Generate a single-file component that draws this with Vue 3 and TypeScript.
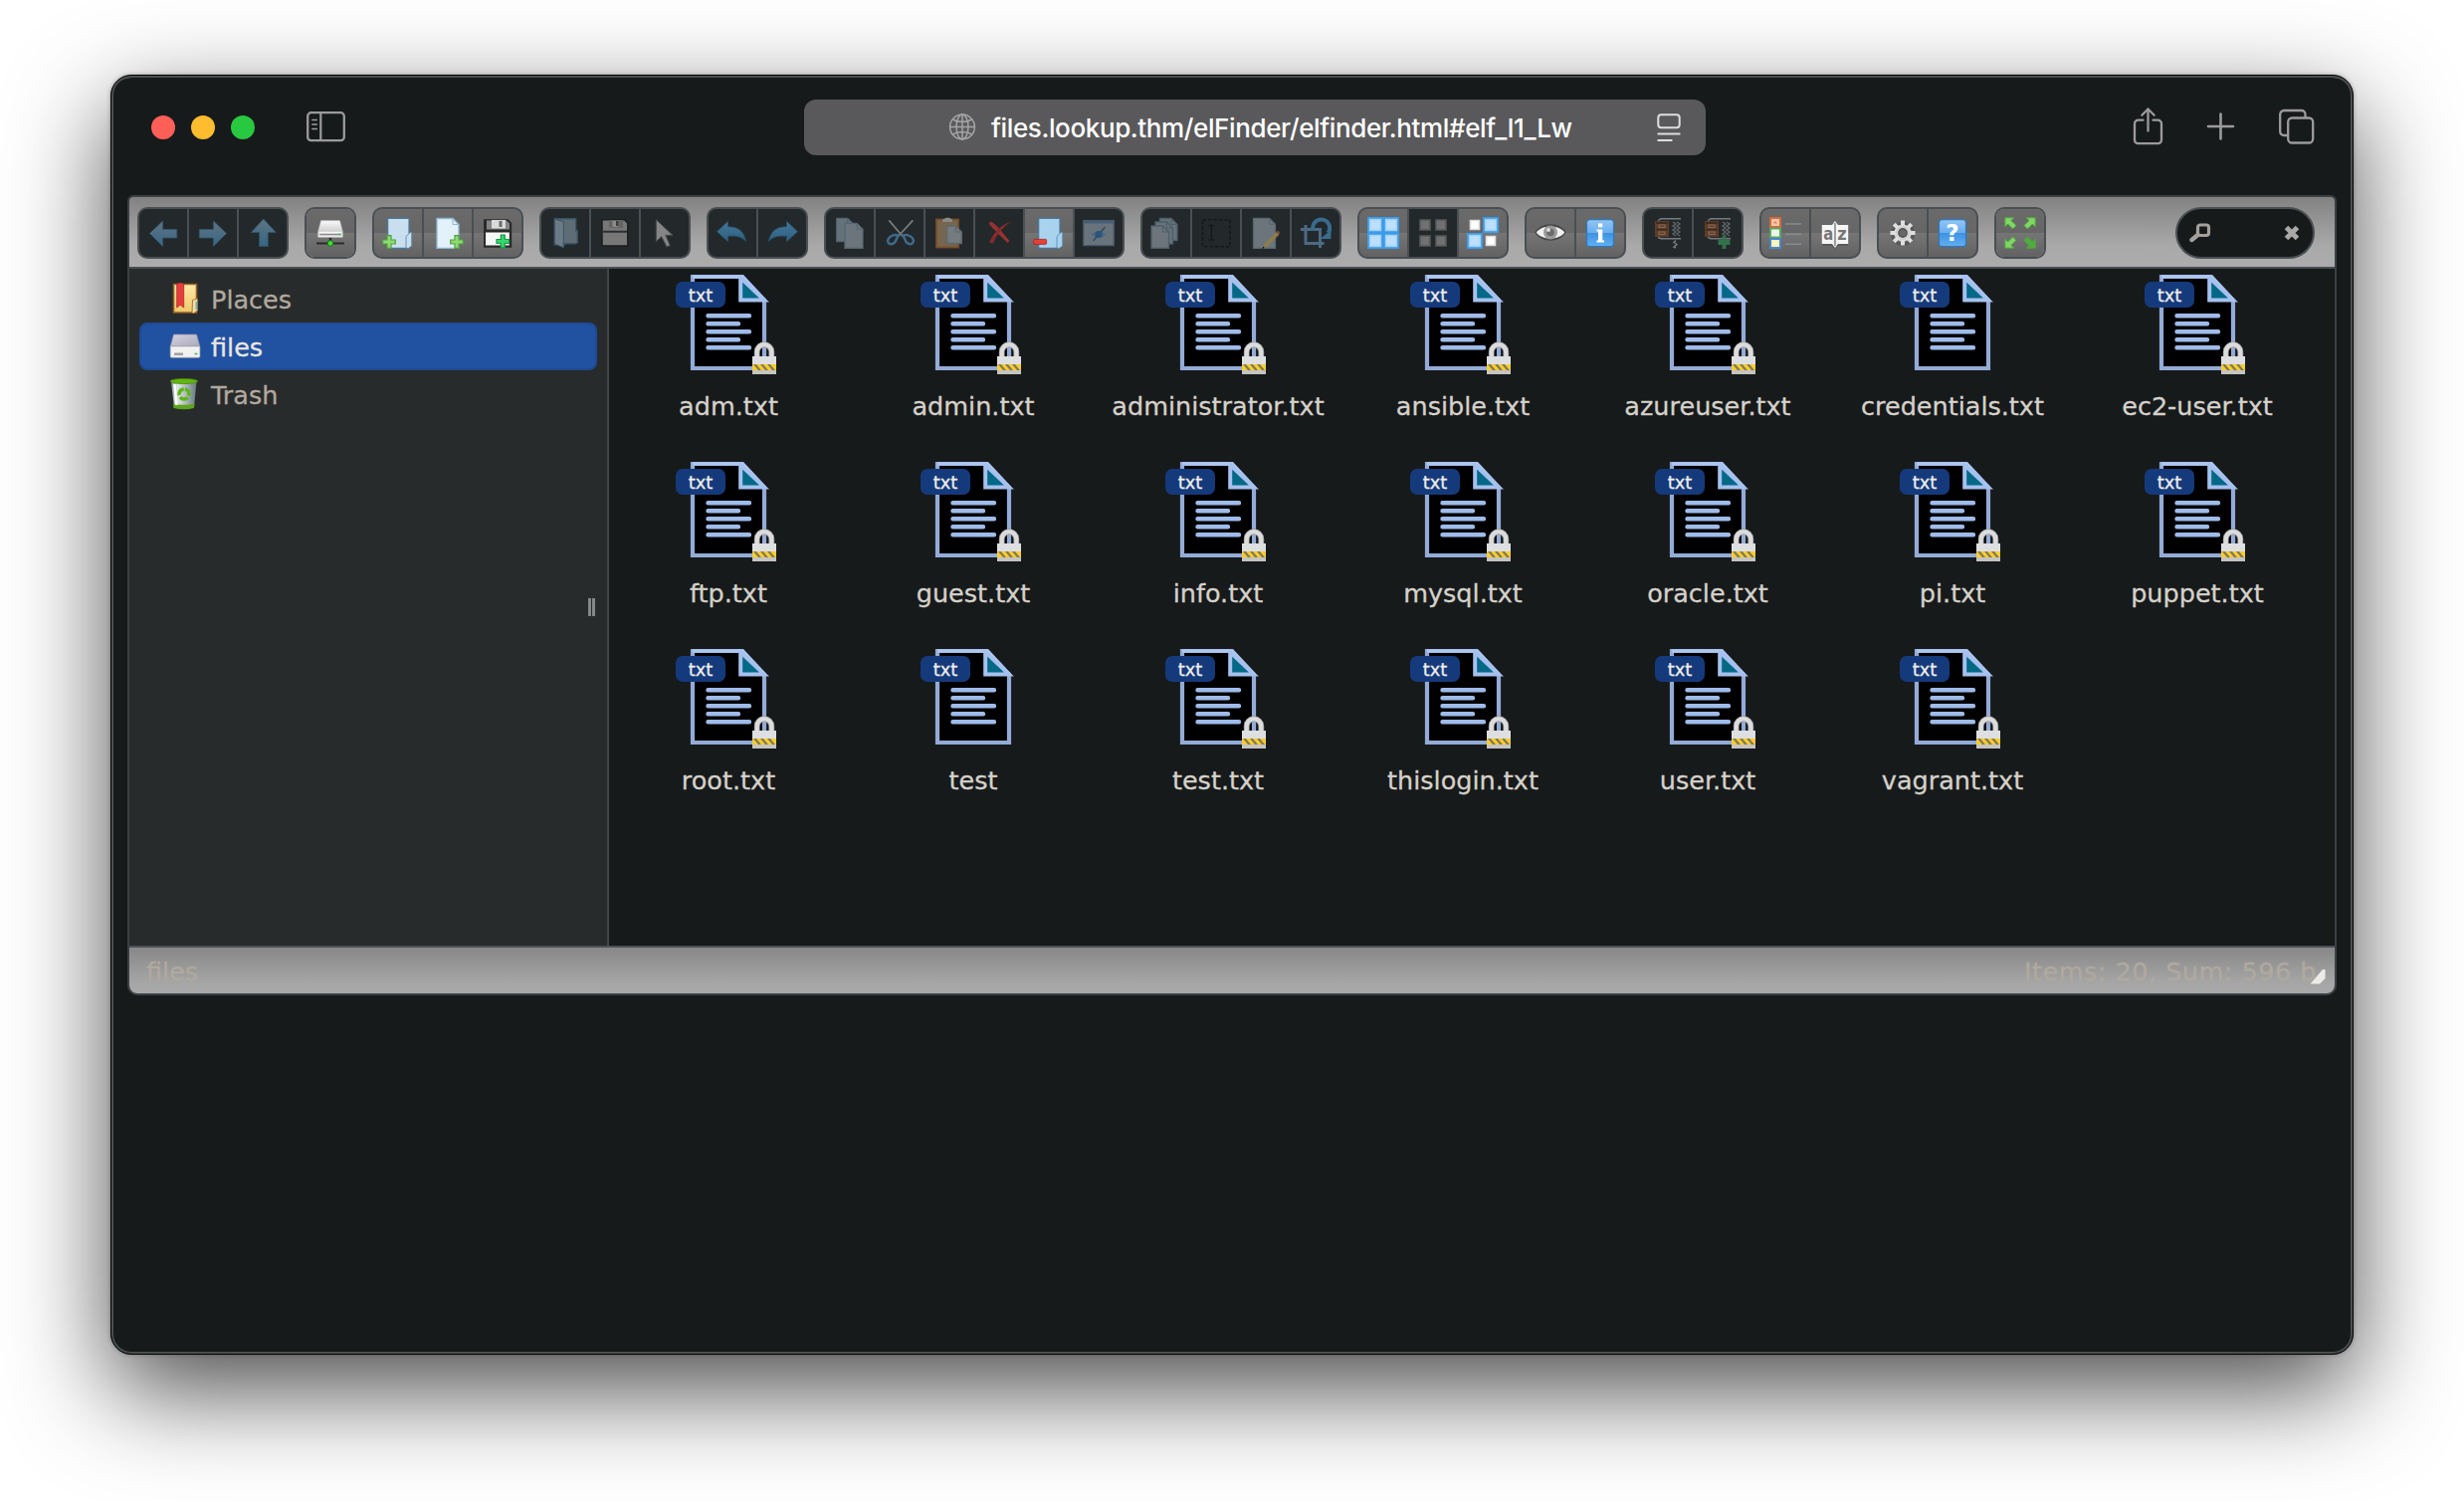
<script setup lang="ts">
interface ToolButton {
  icon: string
  off?: boolean
}
interface FileItem {
  name: string
  locked: boolean
}

const on = (icon: string): ToolButton => ({ icon })
const off = (icon: string): ToolButton => ({ icon, off: true })

const toolbar: ToolButton[][] = [
  [off('back'), off('forward'), off('up')],
  [on('netmount')],
  [on('mkdir'), on('mkfile'), on('upload')],
  [off('open'), off('download'), off('getfile')],
  [off('undo'), off('redo')],
  [off('copy'), off('cut'), off('paste'), off('rm'), on('empty'), off('hide')],
  [off('duplicate'), off('rename'), off('edit'), off('resize')],
  [on('selectall'), off('selectnone'), on('selectinvert')],
  [on('quicklook'), on('info')],
  [off('extract'), off('archive')],
  [on('view'), on('sort')],
  [on('preference'), on('help')],
  [on('fullscreen')],
]

const plus = (x: number, y: number, fill: string, stroke: string) =>
  `<path transform="translate(${x} ${y})" d="M-2-6.3h4v4.3h4.3v4h-4.3v4.3h-4v-4.3h-4.3v-4h4.3z" fill="${fill}" stroke="${stroke}" stroke-width="1.2"/>`

const page = (x: number, y: number, w: number, h: number, fill: string, stroke: string) =>
  `<path d="M${x} ${y}h${w - 6}l6 6v${h - 6}h${-w}z" fill="${fill}" stroke="${stroke}" stroke-width="1.3"/><path d="M${x + w - 6} ${y}v6h6" fill="none" stroke="${stroke}" stroke-width="1"/>`

const folder = (fill: string) =>
  `<path d="M5.700 1.300h21.300v14.500h1.300v13l-2.500 2.500h-20.100z" fill="${fill}" stroke="#47799f" stroke-width="1.200"/><path d="M28.300 15.500h1.400v13.500l-3.500 2.600l-2.200-.8v-11.300z" fill="${fill}" stroke="#5d8db1" stroke-width=".9"/>`

const cabinet =
  '<rect x="3" y="4" width="14" height="16" fill="#5e3d28"/><path d="M4 5h12v2H4zM4 12h12v1.500H4z" fill="#3f2c20"/><rect x="7" y="8" width="6" height="2.500" fill="none" stroke="#8b7160" stroke-width=".9"/><rect x="7" y="15" width="6" height="2.500" fill="none" stroke="#8b7160" stroke-width=".9"/><path d="M6 3.500L9 1.800H29M6 20.500l3 1.200H29" stroke="#777b7e" stroke-width="1.400" fill="none"/><path d="M21 5l3 2-3 2 3 2-3 2 3 2-3 2 3 2M25 5l3 2-3 2 3 2-3 2 3 2-3 2 3 2" fill="none" stroke="#63686b" stroke-width="1.300"/>'

const icons: Record<string, string> = {
  back: '<path d="M2.400 16.500L15.600 4V12.400H29.700V21H15.600V29.500Z" fill="url(#g-arrow)" stroke="#35556b" stroke-width=".8"/>',
  forward: '<path d="M29.600 16.500L16.400 4V12.400H2.300V21H16.400V29.500Z" fill="url(#g-arrow)" stroke="#35556b" stroke-width=".8"/>',
  up: '<path d="M16.700 2L29.400 15.600H21.200V29.400H12.600V15.600H4.300Z" fill="url(#g-arrow)" stroke="#35556b" stroke-width=".8"/>',
  netmount:
    '<path d="M2 26.400h28" stroke="#2b2b2b" stroke-width="2"/><path d="M16 19v6" stroke="#2b2b2b" stroke-width="2.400"/><path d="M6.500 3.600h19l3.100 11.500v4.400a1 1 0 0 1-1 1H4.400a1 1 0 0 1-1-1v-4.400z" fill="url(#g-drive)" stroke="#aaa" stroke-width=".6"/><path d="M4.500 15.300h23" stroke="#fff" stroke-width="1"/><path d="M5.500 17.700h21" stroke="#777" stroke-width="1"/><circle cx="25.400" cy="17.500" r="1" fill="#2fd34a"/><circle cx="16" cy="26.400" r="2.900" fill="#3fdc35" stroke="#176b17" stroke-width="1"/>',
  mkdir: folder('#c9dff0') + plus(7, 25, '#8ddc72', '#52a043'),
  mkfile: page(5, 1.5, 22, 30, '#e3f1fa', '#8fb8d3') + plus(25, 25, '#8ddc72', '#52a043'),
  upload:
    '<path d="M2 2.200h24.500l3.700 3.700V30.700H2z" fill="#2a2a2a"/><rect x="4" y="15.500" width="23.800" height="13" fill="#f7f7f7"/><path d="M5 3.500h20l3 3V12.500H5z" fill="#858585"/><rect x="10" y="3" width="14" height="8.500" fill="#dadada"/><rect x="17.500" y="4" width="3" height="6" fill="#6b6b6b"/>' +
    plus(21.3, 24.5, '#36d66c', '#159a45'),
  open: '<path d="M5.300 1.800h21.400v12h1.500v12l-2 1H15.500v1H5.300z" fill="#5d6c75" stroke="#3a5468" stroke-width="1.400"/><path d="M5.300 1.800l9 3v26l-9-3.800z" fill="#6b7a84" stroke="#3a5468" stroke-width="1"/>',
  download:
    '<path d="M3 2.800h22.500l3.300 3.300V29H3z" fill="#777" stroke="#1b1e20" stroke-width="1.500"/><path d="M4 13.700h24v2H4z" fill="#2b2e30"/><path d="M10 3h14v8H10z" fill="#646464"/><path d="M13.500 4h6v6h-6z" fill="#8b8b8b"/><path d="M17 4h2.500v5H17z" fill="#3c3c3c"/>',
  getfile: '<path d="M7.300 2.700V24.700L12.700 19.700L18 30L21.300 28.600L16.800 18.300H24Z" fill="#858585" stroke="#454a4d" stroke-width="1"/>',
  undo: '<path d="M.5 14.700L11.500 4.300V9.700C21 9.700 27.500 13.500 29.700 24.500C25 19.500 20 18.700 11.500 19.300V24.700Z" fill="url(#g-turn)" stroke="#285069" stroke-width=".8"/>',
  redo: '<path d="M31.500 14.700L20.500 4.300V9.700C11 9.700 4.500 13.500 2.300 24.500C7 19.500 12 18.700 20.500 19.300V24.700Z" fill="url(#g-turn)" stroke="#285069" stroke-width=".8"/>',
  copy: page(2.7, 1.3, 17, 23.4, '#66727a', '#50636f') + page(11, 6.3, 18, 25, '#6b757b', '#55666f'),
  cut: '<path d="M5.300 3.300L19.500 20M29.300 3.300L14 20" stroke="#777b7d" stroke-width="1.800"/><path d="M14.500 18.500c-4-1.500-10 1-10.500 5.500c.5 5 6.500 3.500 8 0zM19.500 18.500c4-1.500 10 1 10.500 5.500c-.5 5-6.500 3.500-8 0z" fill="none" stroke="#3d6a88" stroke-width="2.500"/>',
  paste:
    '<rect x="3" y="2.500" width="22" height="28" fill="#76664f" stroke="#7a4f2b" stroke-width="1.800"/><path d="M9 5V2.800l4-2h3l3 2V5z" fill="#8a8a86"/>' +
    page(13.6, 9, 14.7, 17.5, '#757c7f', '#5d676d'),
  rm: '<path d="M5.500 6.500L8 4.500c5 3 9 8 18.500 19.500l-2 2C17 19 12 14 5.500 6.500z" fill="#963232"/><path d="M28.500 4.300C19 11 13.500 18 10 26.500l-4-1C10 17 17 8 28.500 4.300z" fill="#842c2c"/>',
  empty: folder('#a8d2ee') + '<rect x=".6" y="22.400" width="13" height="5" rx="1" fill="#e5413a" stroke="#a92520" stroke-width=".8"/>',
  hide: '<rect x=".8" y="3.600" width="30.400" height="25" fill="#68737c" stroke="#495a69" stroke-width="1.300"/><path d="M1.500 5.200h29" stroke="#455e77" stroke-width="2.400"/><path d="M8.500 17.500q7.500-7 15 0q-7.500 7-15 0z" fill="#4a6a86"/><path d="M10.500 24L22.500 10" stroke="#314c62" stroke-width="1.600"/><circle cx="16" cy="17.500" r="3.600" fill="#2c5477"/>',
  duplicate:
    page(9.5, 1.5, 17.5, 22, '#66727a', '#4d5e69') +
    page(5, 5, 17.5, 22, '#66727a', '#4d5e69') +
    page(1, 9, 17.5, 22.5, '#6b757b', '#4d5e69'),
  rename: '<rect x="2.500" y="2.800" width="27.500" height="27" fill="none" stroke="#15181a" stroke-width="1.600" stroke-dasharray="3.500 2"/><path d="M8.500 8.500h5.500M11.300 8.500v14.500M8.500 23h5.500" stroke="#15181a" stroke-width="1.600"/>',
  edit:
    page(3.5, 1.3, 22, 30, '#6b757b', '#576770') +
    '<path d="M26.500 15l3 2.500L17 30l-4.500 1.800L14.500 27z" fill="#8c7c4b"/><path d="M26.300 15l2-1.500l2 2l-1.200 2z" fill="#7b4b33"/><path d="M12.300 32l1-2.500l1.500 1.500z" fill="#111"/>',
  resize:
    '<path d="M1 12.500H20.500V31M6 8v18.500H24.500" fill="none" stroke="#4c6a84" stroke-width="3"/><path d="M13.500 13.500A8.500 8.500 0 1 1 28.500 16" fill="none" stroke="#386b8c" stroke-width="4"/><path d="M31.500 13V22H20.500z" fill="#386b8c"/>',
  selectall:
    '<path d="M0 0h32v32H0z" fill="#3b9bea"/><path d="M2.500 2.500h11v11h-11zM18.500 2.500h11v11h-11zM2.500 18.500h11v11h-11zM18.500 18.500h11v11h-11z" fill="#bbdffd" stroke="#a1d0f8" stroke-width="1.400"/>',
  selectnone:
    '<path d="M3 3h10v10H3zM19 3h10v10H19zM3 19h10v10H3zM19 19h10v10H19z" fill="#707070" stroke="#55585a" stroke-width="1.600"/>',
  selectinvert:
    '<path d="M16 0h16v16H16zM0 16h16v16H0z" fill="#3b9bea"/><path d="M18.500 2.500h11v11h-11zM2.500 18.500h11v11h-11z" fill="#bbdffd" stroke="#a1d0f8" stroke-width="1.400"/><path d="M3.500 3.500h9v9h-9zM19.500 19.500h9v9h-9z" fill="#fff" stroke="#dcdcdc" stroke-width="1.600"/>',
  quicklook:
    '<path d="M.3 15.500C6 4.500 26 4.500 31.700 15.500C26 26.500 6 26.500 .3 15.500z" fill="#3c3c3c" opacity=".75"/><path d="M1.800 15.500C7.500 7.500 24.500 7.500 30.200 15.500C24.500 23.500 7.500 23.500 1.800 15.500z" fill="#f0f0f0"/><circle cx="16" cy="15.500" r="7" fill="#9a9a9a"/><circle cx="16" cy="15.500" r="3.800" fill="#6a6a6a"/><circle cx="14" cy="13" r="2" fill="#ddd"/>',
  info: '<rect x="2.500" y="2.700" width="27" height="27" rx="3" fill="url(#g-blue)" stroke="#2f78bd" stroke-width="1.200"/><path d="M14 6.500h4.300v3.800H14zM12.500 12.500h5.800v11H20v2h-7.500v-2H14v-9h-1.500z" fill="#fff"/>',
  extract: cabinet + '<path d="M24 23.500l-2 2 3 2-3 2.500 2 1" fill="none" stroke="#777b7e" stroke-width="1.500"/>',
  archive: cabinet + '<path transform="translate(22.500 25.500)" d="M-2-6.500h4v4h4v5h-4v4h-4v-4h-4v-5h4z" fill="#32724a"/>',
  view:
    '<path d="M16 7h16M16 17.300h16M16 27.300h16" stroke="#858b91" stroke-width="1.500"/><rect x="1" y="1" width="10" height="9" fill="#f6c3a6" stroke="#cf6b3c" stroke-width="2"/><path d="M4 6l2-2 2 3z" fill="#e08050"/><rect x="1" y="11.500" width="10" height="9" fill="#eef7e4" stroke="#58a864" stroke-width="2"/><rect x="1" y="22" width="10" height="9" fill="#f9efb8" stroke="#4a86cc" stroke-width="2"/><rect x="4" y="25" width="4" height="3.500" fill="#fff8c6"/>',
  sort: '<path d="M3 9h9.500l3.500-4 3.500 4H29v20h-9.500L16 32L12.500 29H3z" fill="#4a4a4a" opacity=".5"/><path d="M2.800 8h10.200l3-4 3 4h10.200V27H19l-3 4-3-4H2.800z" fill="#f5f5f5"/><path d="M16 6v23" stroke="#666" stroke-width="1.200"/><text x="4.200" y="23" font-family="DejaVu Sans, sans-serif" font-size="17" font-weight="bold" fill="#777" textLength="10" lengthAdjust="spacingAndGlyphs">a</text><text x="18.200" y="23" font-family="DejaVu Sans, sans-serif" font-size="17" font-weight="bold" fill="#777" textLength="9.500" lengthAdjust="spacingAndGlyphs">z</text>',
  preference:
    '<g transform="translate(16 16)"><circle r="10.500" fill="none" stroke="#444" stroke-opacity=".5" stroke-width="3" cy="1"/><path d="M0-12.500V12.500M-12.500 0H12.500M-8.800-8.800L8.800 8.800M8.800-8.800L-8.800 8.800" stroke="#dedede" stroke-width="4"/><circle r="8.600" fill="#dedede"/><circle r="4.200" fill="#676767" stroke="#555" stroke-width="1.400"/><circle r="6.300" fill="none" stroke="#c6c6c6" stroke-width="1"/></g>',
  help: '<rect x="2.500" y="2.700" width="27" height="27" rx="3" fill="url(#g-blue)" stroke="#2f78bd" stroke-width="1.200"/><text x="16" y="24.300" text-anchor="middle" font-family="DejaVu Sans, sans-serif" font-size="23" font-weight="bold" fill="#fff">?</text>',
  fullscreen:
    '<g fill="#7fd765" stroke="#53a53f" stroke-width="1"><path d="M.8.800h9l-2.800 2.800 5 5-3.400 3.400-5-5-2.800 2.800z"/><path d="M31.200.800v9l-2.800-2.800-5 5-3.400-3.400 5-5L22.200.800z"/><path d="M.8 31.200v-9l2.800 2.800 5-5 3.400 3.400-5 5 2.800 2.800z"/><path fill="#4fae3c" d="M31.200 31.200h-9l2.800-2.800-5-5 3.400-3.400 5 5 2.800-2.800z"/></g>',
}

const places = [
  { id: 'places', label: 'Places', active: false },
  { id: 'volume', label: 'files', active: true },
  { id: 'trash', label: 'Trash', active: false },
]

const unlocked = ['credentials.txt', 'test']
const files: FileItem[] = [
  'adm.txt', 'admin.txt', 'administrator.txt', 'ansible.txt', 'azureuser.txt', 'credentials.txt', 'ec2-user.txt',
  'ftp.txt', 'guest.txt', 'info.txt', 'mysql.txt', 'oracle.txt', 'pi.txt', 'puppet.txt',
  'root.txt', 'test', 'test.txt', 'thislogin.txt', 'user.txt', 'vagrant.txt',
].map((name) => ({ name, locked: !unlocked.includes(name) }))
</script>

<template>
  <div class="desktop">
    <svg class="defs" width="0" height="0">
      <defs>
        <linearGradient id="g-arrow" x1="0" y1="0" x2="0" y2="1"><stop offset="0" stop-color="#607482" /><stop offset="1" stop-color="#366785" /></linearGradient>
        <linearGradient id="g-turn" x1="0" y1="0" x2="0" y2="1"><stop offset="0" stop-color="#46779a" /><stop offset="1" stop-color="#2b5f80" /></linearGradient>
        <linearGradient id="g-drive" x1="0" y1="0" x2="0" y2="1"><stop offset="0" stop-color="#fafafa" /><stop offset=".65" stop-color="#cfcfcf" /><stop offset="1" stop-color="#f0f0f0" /></linearGradient>
        <linearGradient id="g-blue" x1="0" y1="0" x2="0" y2="1"><stop offset="0" stop-color="#92c5f4" /><stop offset=".48" stop-color="#6aaef0" /><stop offset=".5" stop-color="#3f92e0" /><stop offset="1" stop-color="#62b0f5" /></linearGradient>
        <linearGradient id="g-vol" x1="0" y1="0" x2="1" y2="1"><stop offset="0" stop-color="#d3d3e0" /><stop offset="1" stop-color="#aaaabc" /></linearGradient>
        <linearGradient id="g-book" x1="0" y1="0" x2="0" y2="1"><stop offset="0" stop-color="#ffe9a6" /><stop offset="1" stop-color="#eec86c" /></linearGradient>
        <linearGradient id="g-bin" x1="0" y1="0" x2="1" y2="0"><stop offset="0" stop-color="#8d9a9e" /><stop offset=".25" stop-color="#dfe6e8" /><stop offset=".6" stop-color="#a9b6ba" /><stop offset="1" stop-color="#65767b" /></linearGradient>
      </defs>
    </svg>

    <div class="window">
      <header class="titlebar">
        <div class="lights"><i class="red" /><i class="yellow" /><i class="green" /></div>
        <svg class="sidebar-icon" width="40" height="32" viewBox="0 0 40 32" fill="none" stroke="#9b9b9d">
          <rect x="1.200" y="1.200" width="36.600" height="28" rx="3.500" stroke-width="2.300" />
          <path d="M14.300 1.500v27.500" stroke-width="2.200" />
          <path d="M5.800 8.500h4.600M5.800 13h4.600M5.800 17.500h4.600" stroke-width="1.500" stroke-linecap="round" />
        </svg>
        <div class="address">
          <svg class="globe" width="28" height="28" viewBox="0 0 28 28" fill="none" stroke="#a5a5a7" stroke-width="1.500">
            <circle cx="14" cy="13.500" r="12.400" />
            <ellipse cx="14" cy="13.500" rx="6" ry="12.400" />
            <path d="M14 1.100v24.800M1.600 13.500h24.800M4.500 6c5 3.200 14 3.200 19 0M4.500 21c5-3.200 14-3.200 19 0" />
          </svg>
          <span class="url">files.lookup.thm/elFinder/elfinder.html#elf_l1_Lw</span>
          <svg class="reader" width="24" height="28" viewBox="0 0 24 28" fill="none" stroke="#dededf" stroke-width="2" stroke-linecap="round">
            <rect x="1.300" y="1.300" width="21.400" height="13" rx="3" />
            <path d="M1.300 20.500h21.400M1.300 27h13.400" />
          </svg>
        </div>
        <div class="actions">
          <svg width="32" height="40" viewBox="0 0 32 40" fill="none" stroke="#9b9b9d" stroke-width="2.300" stroke-linecap="round" stroke-linejoin="round">
            <path d="M10.500 12.700H5.500a3.500 3.500 0 0 0-3.500 3.500v16.500a3.500 3.500 0 0 0 3.500 3.500h20a3.500 3.500 0 0 0 3.500-3.500V16.200a3.500 3.500 0 0 0-3.500-3.500h-5" />
            <path d="M15.500 23.500V1.500M9.300 7.700l6.200-6.200 6.200 6.200" />
          </svg>
          <svg width="28" height="28" viewBox="0 0 28 28" stroke="#9b9b9d" stroke-width="2.600" stroke-linecap="round"><path d="M13.500 0.500v25M1 13h25" /></svg>
          <svg width="36" height="36" viewBox="0 0 36 36" fill="none" stroke="#9b9b9d" stroke-width="2.300">
            <rect x="9.200" y="8.500" width="25" height="25" rx="4" />
            <path d="M9.200 26H5a3.800 3.800 0 0 1-3.800-3.800V5a4 4 0 0 1 4-4H22.700a3.800 3.800 0 0 1 3.800 3.800V8.500" />
          </svg>
        </div>
      </header>

      <main class="elfinder">
        <div class="toolbar">
          <div v-for="(set, i) in toolbar" :key="i" class="buttonset">
            <button v-for="b in set" :key="b.icon" type="button" class="tool" :class="{ off: b.off }">
              <svg width="32" height="32" viewBox="0 0 32 32" v-html="icons[b.icon]" />
            </button>
          </div>
          <div class="search">
            <svg width="22" height="20" viewBox="0 0 22 20" fill="none" stroke="#a39f9a"><rect x="8.500" y="2" width="11" height="10.500" rx="2.500" stroke-width="3.200" /><path d="M8.500 12l-6 5" stroke-width="4.400" stroke-linecap="round" /></svg>
            <svg width="16" height="16" viewBox="0 0 16 16"><path d="M2.500 2.500l11 11M13.500 2.500L2.500 13.500" stroke="#a8a8a8" stroke-width="5" /></svg>
          </div>
        </div>

        <div class="workzone">
          <nav class="nav">
            <div v-for="p in places" :key="p.id" class="place" :class="{ active: p.active }">
              <svg v-if="p.id === 'places'" width="32" height="32" viewBox="0 0 32 32">
                <path d="M4.500 1.500h23v28.500h-23z" fill="url(#g-book)" stroke="#8f6022" stroke-width="1.600" />
                <path d="M23.500 17.500l5-1.500v12l-3.500 2.500h-2z" fill="#f4dda5" stroke="#a87832" stroke-width="1" />
                <path d="M26.500 19h1.500v8h-1.500z" fill="#55b8dd" />
                <path d="M7.700 1.500q4-3 7 0V25l-3.500-2.800L7.700 25z" fill="#e2403e" stroke="#b52625" stroke-width=".8" />
              </svg>
              <svg v-else-if="p.id === 'volume'" width="32" height="32" viewBox="0 0 32 32">
                <path d="M4.500 4h23l3.400 12H1.200z" fill="url(#g-vol)" stroke="#8e8ea0" stroke-width=".7" />
                <path d="M1.200 16h29.700v10q0 1.200-1.500 1.200H2.600q-1.400 0-1.400-1.200z" fill="#f1f1f1" stroke="#adadad" stroke-width=".7" />
                <path d="M5 22.500h9v2.500H5z" fill="#777" opacity=".65" /><path d="M25.500 23.500h3" stroke="#4dae55" stroke-width="1.400" />
              </svg>
              <svg v-else width="32" height="32" viewBox="0 0 32 32">
                <path d="M2 3.500h25.500l-2.500 25.500q-9.500 2.500-20 0z" fill="url(#g-bin)" />
                <path d="M3.900 25.500q10.500 2.500 21.500 0l-.5 4.500q-10 2.500-20.500 0z" fill="#5da51e" />
                <path d="M5.500 6l1.800 21" stroke="#fff" stroke-width="2.400" />
                <ellipse cx="14.800" cy="3" rx="13.700" ry="2.600" fill="#62b512" stroke="#468a0b" stroke-width=".8" />
                <circle cx="15" cy="16" r="5" fill="none" stroke="#62b512" stroke-width="3.600" stroke-dasharray="8.500 1.970" transform="rotate(-80 15 16)" />
              </svg>
              <span>{{ p.label }}</span>
            </div>
            <div class="splitter"><i /><i /></div>
          </nav>
          <section class="cwd">
            <div v-for="f in files" :key="f.name" class="file">
              <div class="thumb">
                <svg width="96" height="100" viewBox="0 0 96 100">
                  <path d="M12 2H62L84 25.500V94H12Z" fill="#000" stroke="#93abd6" stroke-width="4.200" />
                  <path d="M12 2H62L84 25.500" fill="none" stroke="#adc7f1" stroke-width="3.600" />
                  <path d="M60.200 3V25.500H84Z" fill="#046887" stroke="#a6c1ee" stroke-width="4" />
                  <path d="M27.500 41.300H69M27.500 49.300H58M27.500 57.300H69M27.500 65.300H58M27.500 73.300H69" stroke="#9fbbe9" stroke-width="4.400" stroke-linecap="round" />
                  <g v-if="f.locked">
                    <path d="M76.700 83V77.500a7.300 7.300 0 0 1 14.600 0V83" fill="none" stroke="#999" stroke-width="5.800" />
                    <path d="M76.700 83V77.500a7.300 7.300 0 0 1 14.600 0V83" fill="none" stroke="#dcdcdc" stroke-width="4.200" />
                    <rect x="72" y="82" width="24" height="18" fill="#dedfe0" />
                    <rect x="72" y="90" width="24" height="6" fill="#f7cd30" />
                    <path d="M73 90l5 6h3l-5-6zM80 90l5 6h3l-5-6zM87 90l5 6h3l-5-6z" fill="#857a55" />
                    <rect x="72" y="96" width="24" height="4" fill="#c4c4c1" />
                  </g>
                </svg>
                <span class="badge">txt</span>
              </div>
              <div class="name">{{ f.name }}</div>
            </div>
          </section>
        </div>

        <footer class="statusbar">
          <span>files</span>
          <span class="stat">Items: 20, Sum: 596 b</span>
          <svg class="grip" width="16" height="16" viewBox="0 0 16 16"><path d="M.5 15.500L13 1H15.500V10L10 15.500Z" fill="#ecebe8" /></svg>
        </footer>
      </main>
    </div>
  </div>
</template>

<style>
body {
  margin: 0;
  background: #fff;
}
</style>

<style scoped>
.desktop {
  width: 2476px;
  height: 1508px;
  box-sizing: border-box;
  padding: 75px 111px 148px;
  background: #fff;
  overflow: hidden;
  font-family: 'DejaVu Sans', Verdana, sans-serif;
}
.defs {
  position: absolute;
}
.window {
  width: 2254px;
  height: 1286px;
  box-sizing: border-box;
  border: 1px solid #000;
  border-radius: 21px;
  background: #171a1b;
  box-shadow:
    inset 0 0 0 2px #4b4e4f,
    inset 0 2px 0 #686b6b,
    0 36px 100px rgba(0, 0, 0, 0.7),
    0 0 4px rgba(0, 0, 0, 0.3);
}
.titlebar {
  height: 104px;
  display: flex;
  align-items: center;
  padding: 0 38px 0 40px;
}
.lights {
  display: flex;
  gap: 16px;
}
.lights i {
  width: 24px;
  height: 24px;
  border-radius: 50%;
}
.red { background: #ff5f57; }
.yellow { background: #febc2e; }
.green { background: #28c840; }
.sidebar-icon {
  margin-left: 52px;
}
.address {
  width: 906px;
  height: 56px;
  box-sizing: border-box;
  margin-left: 460px;
  padding: 0 25px 0 145px;
  display: flex;
  align-items: center;
  border-radius: 12px;
  background: #59595b;
}
.url {
  margin-left: 15px;
  padding-top: 2px;
  font: 500 26px/54px Inter, sans-serif;
  letter-spacing: -0.38px;
  color: #fff;
  white-space: nowrap;
}
.reader {
  margin-left: auto;
  overflow: visible;
}
.actions {
  flex: 1;
  display: flex;
  align-items: center;
  justify-content: flex-end;
}
.actions svg {
  overflow: visible;
}
.actions svg:nth-child(1) { margin-right: 43px; }
.actions svg:nth-child(2) { margin-right: 44px; }
.elfinder {
  margin: 16px 16px 0;
  height: 804px;
  box-sizing: border-box;
  border: 2px solid #3b4043;
  border-radius: 6px 6px 10px 10px;
  overflow: hidden;
}
.toolbar {
  height: 72px;
  box-sizing: border-box;
  display: flex;
  gap: 16px;
  padding: 10px 20px 8px 8px;
  border-bottom: 2px solid #4a4e52;
  background: linear-gradient(#828282, #a9a9a9 70%, #acacac);
}
.buttonset {
  display: flex;
  gap: 2px;
  height: 52px;
  box-sizing: border-box;
  border: 2px solid #4a4f53;
  border-radius: 10px;
  background: #4a4f53;
  overflow: hidden;
}
.tool {
  width: 48px;
  height: 48px;
  padding: 8px;
  border: 0;
  background: linear-gradient(#6a6a6a, #666 50%, #757575 51%, #626262);
}
.tool.off {
  background: #23282b;
}
.tool svg {
  display: block;
}
.search {
  margin-left: auto;
  width: 140px;
  height: 52px;
  box-sizing: border-box;
  padding: 0 13px 0 12px;
  display: flex;
  align-items: center;
  justify-content: space-between;
  border: 2px solid #4a4f53;
  border-radius: 26px;
  background: #171a1b;
}
.workzone {
  display: flex;
  height: 680px;
}
.nav {
  position: relative;
  width: 482px;
  box-sizing: border-box;
  padding: 6px 10px 0;
  border-right: 2px solid #424648;
  background: #282b2c;
}
.place {
  height: 48px;
  box-sizing: border-box;
  display: flex;
  align-items: center;
  gap: 10px;
  padding-left: 28px;
  border: 2px solid transparent;
  border-radius: 8px;
  font-size: 25.5px;
  color: #b0a99f;
  -webkit-text-stroke: 0.3px currentColor;
}
.place span {
  padding-top: 1px;
}
.place.active {
  border-color: #1e4a94;
  background: #2151a1;
  color: #e8e6e3;
}
.place svg {
  flex: none;
}
.splitter {
  position: absolute;
  right: 12px;
  top: 331px;
  display: flex;
  gap: 1px;
}
.splitter i {
  width: 3px;
  height: 18px;
  background: #858687;
}
.cwd {
  flex: 1;
  display: grid;
  grid-template-columns: repeat(7, 240px);
  grid-auto-rows: 188px;
  column-gap: 6px;
  align-content: start;
  background: #171a1b;
}
.file {
  padding-top: 6px;
  display: flex;
  flex-direction: column;
  align-items: center;
}
.thumb {
  position: relative;
  width: 96px;
  height: 100px;
}
.badge {
  position: absolute;
  left: -5px;
  top: 7px;
  width: 50px;
  height: 26px;
  border-radius: 7px;
  background: #153a7c;
  color: #f0eeeb;
  font-size: 17.8px;
  line-height: 27px;
  text-align: center;
  -webkit-text-stroke: 0.3px currentColor;
}
.name {
  margin-top: 16px;
  font-size: 25.5px;
  line-height: 32px;
  color: #d5d1ca;
  white-space: nowrap;
  -webkit-text-stroke: 0.3px currentColor;
}
.statusbar {
  position: relative;
  height: 48px;
  box-sizing: border-box;
  padding: 1px 18px 0 17px;
  display: flex;
  justify-content: space-between;
  align-items: center;
  border-top: 2px solid #4b4e55;
  background: linear-gradient(#888, #a5a5a5 75%, #a9a9a9);
  font-size: 25.5px;
  color: #b0a99f;
  -webkit-text-stroke: 0.3px currentColor;
}
.stat {
  letter-spacing: 0.5px;
}
.grip {
  position: absolute;
  right: 9px;
  bottom: 9px;
}
</style>
